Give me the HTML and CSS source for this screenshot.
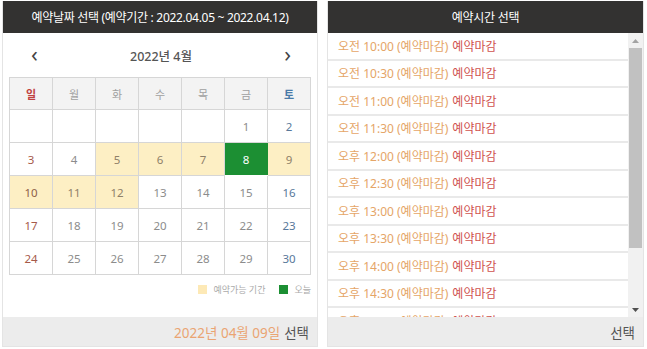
FILE: index.html
```html
<!DOCTYPE html>
<html lang="ko">
<head>
<meta charset="utf-8">
<link rel="stylesheet" href="styles.css">
</head>
<body>
<div class="page">
  <section class="panel date-panel">
    <header class="panel-head">예약날짜 선택 (예약기간 : 2022.04.05 ~ 2022.04.12)</header>
    <div class="panel-body">
      <div class="month-nav">
        <span class="arrow">&#8249;</span>
        <span class="month">2022년 4월</span>
        <span class="arrow">&#8250;</span>
      </div>
      <table class="cal">
        <thead>
          <tr><th class="sun">일</th><th>월</th><th>화</th><th>수</th><th>목</th><th>금</th><th class="sat">토</th></tr>
        </thead>
        <tbody>
          <tr><td></td><td></td><td></td><td></td><td></td><td>1</td><td class="sat">2</td></tr>
          <tr><td class="sun">3</td><td>4</td><td class="avail">5</td><td class="avail">6</td><td class="avail">7</td><td class="today">8</td><td class="avail sat">9</td></tr>
          <tr><td class="avail sun">10</td><td class="avail">11</td><td class="avail">12</td><td>13</td><td>14</td><td>15</td><td class="sat">16</td></tr>
          <tr><td class="sun">17</td><td>18</td><td>19</td><td>20</td><td>21</td><td>22</td><td class="sat">23</td></tr>
          <tr><td class="sun">24</td><td>25</td><td>26</td><td>27</td><td>28</td><td>29</td><td class="sat">30</td></tr>
        </tbody>
      </table>
      <div class="legend">
        <span class="sw sw-avail"></span><span class="lg-text">예약가능 기간</span>
        <span class="sw sw-today"></span><span class="lg-text">오늘</span>
      </div>
    </div>
    <footer class="panel-foot"><span class="picked">2022년 04월 09일</span> 선택</footer>
  </section>

  <section class="panel time-panel">
    <header class="panel-head">예약시간 선택</header>
    <div class="time-wrap">
      <ul class="times">
        <li><span class="t">오전 10:00 (예약마감)</span> <span class="closed">예약마감</span></li>
        <li><span class="t">오전 10:30 (예약마감)</span> <span class="closed">예약마감</span></li>
        <li><span class="t">오전 11:00 (예약마감)</span> <span class="closed">예약마감</span></li>
        <li><span class="t">오전 11:30 (예약마감)</span> <span class="closed">예약마감</span></li>
        <li><span class="t">오후 12:00 (예약마감)</span> <span class="closed">예약마감</span></li>
        <li><span class="t">오후 12:30 (예약마감)</span> <span class="closed">예약마감</span></li>
        <li><span class="t">오후 13:00 (예약마감)</span> <span class="closed">예약마감</span></li>
        <li><span class="t">오후 13:30 (예약마감)</span> <span class="closed">예약마감</span></li>
        <li><span class="t">오후 14:00 (예약마감)</span> <span class="closed">예약마감</span></li>
        <li><span class="t">오후 14:30 (예약마감)</span> <span class="closed">예약마감</span></li>
        <li><span class="t">오후 15:00 (예약마감)</span> <span class="closed">예약마감</span></li>
      </ul>
      <div class="scrollbar">
        <div class="sb-btn"><svg width="7" height="4" viewBox="0 0 7 4"><polygon points="0,4 7,4 3.5,0" fill="#a3a3a3"/></svg></div>
        <div class="sb-track"><div class="sb-thumb"></div></div>
        <div class="sb-btn"><svg width="7" height="4" viewBox="0 0 7 4"><polygon points="0,0 7,0 3.5,4" fill="#505050"/></svg></div>
      </div>
    </div>
    <footer class="panel-foot">선택</footer>
  </section>
</div>
</body>
</html>
```

FILE: styles.css
```css
* { box-sizing: border-box; }
html, body { margin: 0; padding: 0; background: #fff; }
body {
  font-family: "Noto Sans", "Noto Sans CJK KR", sans-serif;
  color: #666;
}
.page {
  display: flex;
  gap: 9px;
  padding: 1px 3px 0 2px;
}
.panel {
  display: flex;
  flex-direction: column;
  height: 346px;
  border: 1px solid #e4e4e4;
  border-top: none;
}
.date-panel { width: 316px; }
.time-panel { width: 317px; }
.panel-head {
  height: 32px;
  background: #333231;
  color: #fff;
  font-size: 12px;
  display: flex;
  align-items: center;
  justify-content: center;
  flex: none;
  letter-spacing: -0.3px;
}
.panel-body {
  flex: 1;
  padding: 0 6px;
  background: #fff;
}
.month-nav {
  height: 44px;
  display: flex;
  align-items: center;
  justify-content: space-between;
  padding: 0 20px 0 22px;
}
.arrow {
  font-size: 22px;
  color: #444;
  line-height: 1;
  margin-top: -4px;
}
.month {
  font-size: 12.5px;
  color: #555;
  font-weight: 500;
}
.cal {
  width: 302px;
  border-collapse: collapse;
  table-layout: fixed;
  font-size: 11.5px;
}
.cal th, .cal td {
  border: 1px solid #d6d6d6;
  height: 33px;
  text-align: center;
  color: #8c8c8c;
  font-weight: normal;
  padding: 0;
}
.cal th {
  background: #f3f3f3;
  height: 32px;
  font-size: 11px;
  color: #a0a0a0;
}
.cal th.sun { color: #c04040; font-weight: bold; }
.cal th.sat { color: #4a7aa8; font-weight: bold; }
.cal td.sun { color: #a65a4a; }
.cal td.sat { color: #58789a; }
.cal td.avail { background: #fdefc4; color: #8f8068; }
.cal td.avail.sun { color: #8f6048; }
.cal td.today { background: #1c8f33; color: #fff; border-color: #fff #1c8f33 #fff #d6d6d6; }
.legend {
  display: flex;
  align-items: center;
  justify-content: flex-end;
  height: 28px;
  padding-right: 0;
  font-size: 9px;
  color: #aaa;
}
.sw { width: 9px; height: 9px; display: inline-block; }
.sw-avail { background: #fde9b6; margin-right: 6px; }
.sw-today { background: #1c8f33; margin-left: 14px; margin-right: 6px; }
.panel-foot {
  height: 29px;
  flex: none;
  background: #ececec;
  display: flex;
  align-items: center;
  justify-content: flex-end;
  padding-right: 8px;
  font-size: 13.5px;
  color: #555;
  gap: 4px;
}
.picked { color: #eaa472; }
.time-wrap {
  flex: 1;
  display: flex;
  min-height: 0;
  overflow: hidden;
  background: #fff;
}
.times {
  flex: 1;
  list-style: none;
  margin: 0;
  padding: 0;
  overflow: hidden;
}
.times li {
  height: 27.5px;
  border-bottom: 2px solid #e9e9e9;
  display: flex;
  align-items: center;
  padding-left: 10px;
  font-size: 12px;
  gap: 4px;
  background: #fff;
}
.t { color: #e5a567; }
.closed { color: #d0524e; }
.scrollbar {
  width: 15px;
  flex: none;
  display: flex;
  flex-direction: column;
  background: #f1f1f1;
}
.sb-btn {
  height: 15px;
  flex: none;
  display: flex;
  align-items: center;
  justify-content: center;
}
.sb-track { flex: 1; padding: 0 1px; }
.sb-thumb { height: 200px; background: #c1c1c1; }
```
